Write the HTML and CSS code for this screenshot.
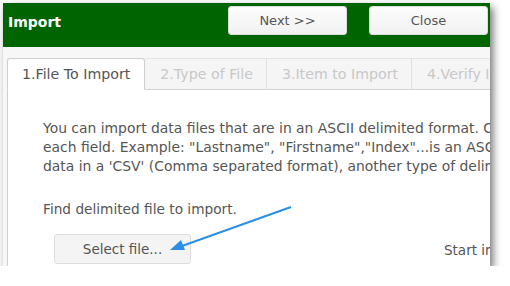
FILE: index.html
```html
<!DOCTYPE html>
<html lang="en-us">
<head>
    <meta charset="utf-8"/>
    <title>Import</title>
    <link rel="stylesheet" href="styles.css">
</head>
<body>

    <div class="window">
        <div class="header">
            <div class="title">Import</div>
            <button class="head-btn next">Next &gt;&gt;</button>
            <button class="head-btn">Close</button>
        </div>

        <div class="body">
            <ul class="tabs">
                <li class="tab active">1.File To Import</li>
                <li class="tab">2.Type of File</li>
                <li class="tab">3.Item to Import</li>
                <li class="tab">4.Verify Import</li>
            </ul>

            <div class="panel">
                <p class="intro">
                    You can import data files that are in an ASCII delimited format. Commas separate<br>
                    each field. Example: "Lastname", "Firstname","Index"...is an ASCII delimited file. If your<br>
                    data in a 'CSV' (Comma separated format), another type of delimited file, select it.
                </p>

                <p class="find">Find delimited file to import.</p>

                <div class="file-row">
                    <button class="select-btn">Select file...</button>
                    <span class="start">Start import</span>
                </div>

                <svg class="arrow" width="140" height="60" viewBox="0 0 140 60">
                    <line x1="127" y1="4" x2="18" y2="43" stroke="#2b8fe6" stroke-width="2"/>
                    <polygon points="6,47 17,37 21,47" fill="#2b8fe6"/>
                </svg>
            </div>
        </div>
    </div>

</body>
</html>
```

FILE: styles.css
```css
body {
    margin: 0;
    background: #fff;
    font-family: "DejaVu Sans", Verdana, sans-serif;
}

.window {
    margin: 3px 0 0 3px;
    width: 487px;
    height: 263px;
    overflow: hidden;
    background: #f7f7f7;
    box-shadow: 3px 4px 8px rgba(0, 0, 0, 0.55);
}

.header {
    display: flex;
    align-items: center;
    height: 44px;
    background: #006400;
    padding: 0 2px 0 5px;
    gap: 22px;
}

.title {
    color: #fff;
    font-weight: bold;
    font-size: 14px;
    flex: 1;
    margin-top: -6px;
}

.head-btn {
    width: 119px;
    height: 29px;
    margin-top: -9px;
    border: 1px solid #ddd;
    border-radius: 3px;
    background: linear-gradient(#fdfdfd, #f1f1f1);
    color: #555;
    font-family: inherit;
    font-size: 13px;
}

.body {
    padding: 11px 0 0 4px;
}

.tabs {
    display: flex;
    list-style: none;
    margin: 0;
    padding: 0;
    height: 32px;
    white-space: nowrap;
}

.tab {
    padding: 0 13px 0 15px;
    line-height: 31px;
    font-size: 14.2px;
    color: #c8c8c8;
    background: #f5f5f5;
    border-top: 1px solid #e6e6e6;
    border-bottom: 1px solid #d4d4d4;
    border-right: 1px solid #e0e0e0;
}

.tab.active {
    color: #555;
    background: #fff;
    border: 1px solid #cfcfcf;
    border-bottom-color: #fff;
    border-radius: 3px 3px 0 0;
    padding: 0 14px 0 14px;
}

.panel {
    position: relative;
    background: #fff;
    border-left: 1px solid #cfcfcf;
    height: 173px;
    padding: 29px 0 0 35px;
    color: #555;
    font-size: 13.7px;
    white-space: nowrap;
}

.intro {
    margin: 0;
    font-size: 13.9px;
    line-height: 19px;
}

.find {
    margin: 25px 0 0;
}

.file-row {
    display: flex;
    align-items: center;
    margin-top: 17px;
    padding-left: 11px;
}

.select-btn {
    flex-shrink: 0;
    width: 137px;
    height: 30px;
    border: 1px solid #ddd;
    border-radius: 3px;
    background: #f4f4f4;
    color: #555;
    font-family: inherit;
    font-size: 13.5px;
}

.start {
    flex-shrink: 0;
    margin-left: 253px;
    margin-top: 2px;
    font-size: 13.5px;
}

.arrow {
    position: absolute;
    left: 156px;
    top: 113px;
}
```
